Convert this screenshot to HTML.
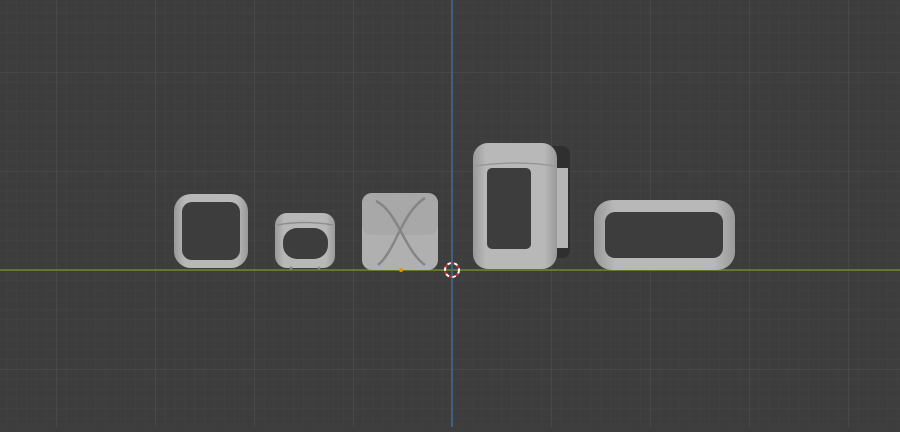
<!DOCTYPE html>
<html><head><style>html,body{margin:0;padding:0;background:#3d3d3d;overflow:hidden}</style></head><body>
<svg width="900" height="427" viewBox="0 0 900 427" xmlns="http://www.w3.org/2000/svg">
<defs>
<pattern id="minor" x="452" y="270" width="9.9" height="9.9" patternUnits="userSpaceOnUse"><path d="M0 0V9.9M0 0H9.9" stroke="#444" stroke-width="1"/></pattern>
<pattern id="major" x="452" y="270" width="99" height="99" patternUnits="userSpaceOnUse"><path d="M0 0V99M0 0H99" stroke="#4d4d4d" stroke-width="1.2"/></pattern>
<linearGradient id="h" x1="0" y1="0" x2="1" y2="0"><stop offset="0" stop-color="#999"/><stop offset=".15" stop-color="#b8b8b8"/><stop offset=".85" stop-color="#b8b8b8"/><stop offset="1" stop-color="#999"/></linearGradient>
</defs>
<rect width="900" height="427" fill="#3d3d3d"/>
<rect width="900" height="427" fill="url(#minor)"/>
<rect width="900" height="427" fill="url(#major)"/>
<line x1="0" y1="270" x2="900" y2="270" stroke="#6c8a2f" stroke-width="1.5"/>
<line x1="452" y1="0" x2="452" y2="427" stroke="#3f6a9a" stroke-width="1.5"/>
<rect x="174" y="194" width="74" height="74" rx="17" fill="url(#h)"/>
<rect x="182" y="202" width="58" height="58" rx="10" fill="#3d3d3d"/>
<rect x="275" y="213" width="60" height="55" rx="12" fill="url(#h)"/>
<path d="M277 225 Q305 220 333 225" stroke="#8e8e8e" stroke-width="1.5" fill="none"/>
<rect x="283" y="228" width="45" height="31" rx="14" fill="#3d3d3d"/>
<circle cx="291" cy="268" r="1.5" fill="#888"/><circle cx="319" cy="268" r="1.5" fill="#888"/>
<rect x="362" y="193" width="76" height="77" rx="10" fill="#b0b0b0"/>
<rect x="362" y="193" width="76" height="42" rx="10" fill="#a8a8a8"/>
<path d="M376 201 C398 212 404 250 425 265 M425 198 C402 212 396 250 378 265" stroke="#858585" stroke-width="2.5" fill="none"/>
<circle cx="401" cy="270" r="2" fill="#e0901c"/>
<rect x="540" y="146" width="30" height="112" rx="8" fill="#2f2f2f"/>
<rect x="556" y="168" width="12" height="80" fill="#b5b5b5"/>
<rect x="473" y="143" width="84" height="126" rx="15" fill="url(#h)"/>
<path d="M476 166 Q515 160 555 166" stroke="#979797" stroke-width="1.5" fill="none"/>
<rect x="487" y="168" width="44" height="81" rx="5" fill="#3d3d3d"/>
<rect x="594" y="200" width="141" height="70" rx="18" fill="url(#h)"/>
<rect x="605" y="212" width="118" height="46" rx="10" fill="#3d3d3d"/>
<circle cx="452" cy="270" r="7" fill="none" stroke="#fff" stroke-width="2" stroke-dasharray="4 3"/>
<circle cx="452" cy="270" r="7" fill="none" stroke="#c33" stroke-width="2" stroke-dasharray="3 4" stroke-dashoffset="3.5"/>
</svg>
</body></html>
